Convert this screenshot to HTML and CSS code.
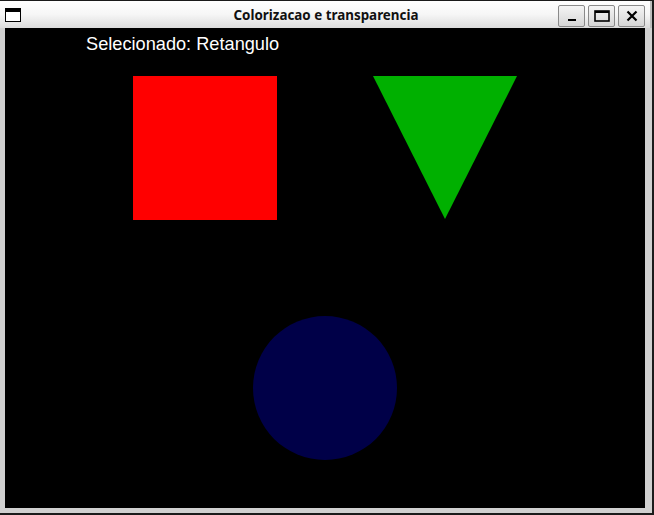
FILE: index.html
```html
<!DOCTYPE html>
<html>
<head>
<meta charset="utf-8">
<link rel="stylesheet" href="styles.css">
</head>
<body>
<div class="window">
  <div class="titlebar">
    <svg class="app-icon" width="16" height="14" viewBox="0 0 16 14">
      <rect x="0.5" y="0.5" width="15" height="13" fill="#fff" stroke="#000"/>
      <rect x="0" y="0" width="16" height="4" fill="#000"/>
    </svg>
    <div class="title">Colorizacao e transparencia</div>
    <div class="buttons">
      <div class="btn">
        <svg width="12" height="12" viewBox="0 0 12 12"><rect x="2" y="9" width="8" height="2" fill="#000"/></svg>
      </div>
      <div class="btn">
        <svg width="16" height="12" viewBox="0 0 16 12"><rect x="1" y="1" width="14" height="10" fill="none" stroke="#000" stroke-width="1.6"/><rect x="1" y="1" width="14" height="2" fill="#000"/></svg>
      </div>
      <div class="btn">
        <svg width="12" height="12" viewBox="0 0 12 12"><path d="M1.5 1.5 L10.5 10.5 M10.5 1.5 L1.5 10.5" stroke="#000" stroke-width="2.2"/></svg>
      </div>
    </div>
  </div>
  <div class="frame">
    <svg class="canvas" width="640" height="480" viewBox="0 0 640 480">
      <rect width="640" height="480" fill="#000"/>
      <text x="81" y="22" class="label">Selecionado: Retangulo</text>
      <rect x="128" y="48" width="144" height="144" fill="#ff0000"/>
      <polygon points="368,48 512,48 440,191" fill="#00b000"/>
      <circle cx="320" cy="360" r="72" fill="#000048"/>
    </svg>
  </div>
</div>
</body>
</html>
```
FILE: styles.css
```css
html, body {
  margin: 0;
  padding: 0;
  background: #1b1b1b;
  width: 654px;
  height: 515px;
  overflow: hidden;
}
.window {
  margin-top: 1px;
  width: 652px;
  height: 512px;
  background: #d0d0d0;
  display: flex;
  flex-direction: column;
}
.titlebar {
  height: 27px;
  background: linear-gradient(#ffffff 0%, #f6f6f6 50%, #dcdcdc 100%);
  display: flex;
  align-items: center;
  position: relative;
  box-sizing: border-box;
  border-right: 2px solid #bdbdbd;
}
.app-icon {
  margin-left: 5px;
  margin-top: 1px;
}
.title {
  position: absolute;
  left: 0;
  right: 0;
  text-align: center;
  font-family: "Noto Sans", "Open Sans", sans-serif;
  font-weight: bold;
  font-size: 13.4px;
  color: #111;
  padding-left: 2px;
  pointer-events: none;
}
.buttons {
  margin-left: auto;
  margin-right: 5px;
  display: flex;
  gap: 3px;
  margin-top: 2px;
}
.btn {
  width: 27px;
  height: 22px;
  box-sizing: border-box;
  border: 1px solid #8a8a8a;
  border-radius: 2px;
  background: linear-gradient(#f4f4f4, #d6d6d6);
  display: flex;
  align-items: center;
  justify-content: center;
}
.frame {
  padding: 0 7px 5px 5px;
  display: flex;
}
.canvas {
  display: block;
}
.label {
  font-family: "Liberation Sans", Arial, sans-serif;
  font-size: 18.2px;
  fill: #fff;
}
```
